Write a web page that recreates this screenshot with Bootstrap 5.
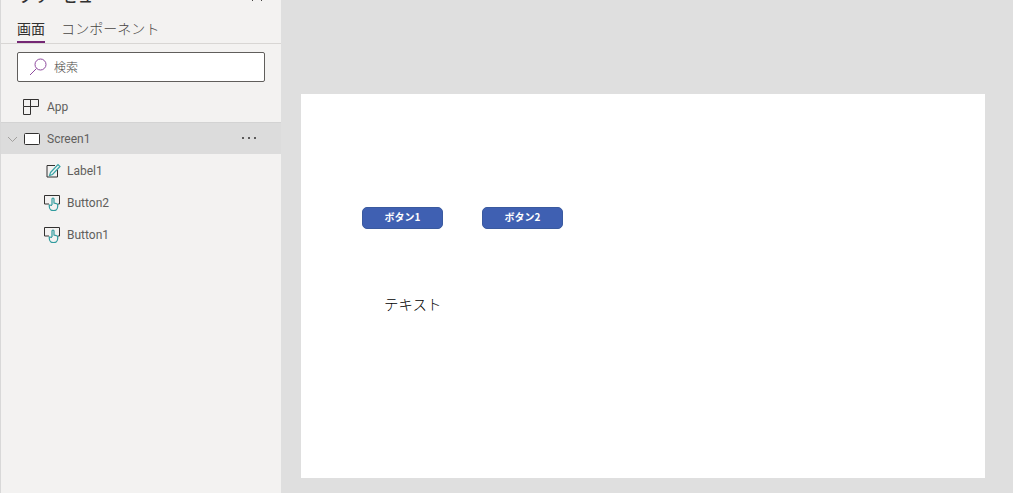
<!DOCTYPE html>
<html lang="ja">
<head>
<meta charset="utf-8">
<link href="https://cdn.jsdelivr.net/npm/bootstrap@5.3.0/dist/css/bootstrap.min.css" rel="stylesheet">
<style>
html,body{height:493px;overflow:hidden;}
body{background:#dfdfdf;font-family:Roboto,"Noto Sans CJK JP",sans-serif;color:#605e5c;}
.shell{height:493px;}
.tree{width:281px;flex:none;height:493px;background:#f3f2f1;border-left:1px solid #d8d8d8;overflow:hidden;}
.tree-head{height:28px;margin-top:-18px;padding:0 18px 0 17px;}
.tree-title{font:500 15px/28px "Noto Sans CJK JP",sans-serif;color:#323130;}
.tab-row{height:34px;border-bottom:1px solid #d8d6d4;padding-left:16px;gap:16px;}
.tab-item{font:300 14px/20px "Noto Sans CJK JP",sans-serif;letter-spacing:.05px;color:#484644;height:33px;padding-top:8px;}
.tab-on{font-weight:400;color:#323130;border-bottom:2px solid #742774;}
.find{margin:8px 16px 0 16px;height:30px;background:#fff;border:1px solid #605e5c;border-radius:2px;padding-left:11px;gap:5px;font:300 12px/1 "Noto Sans CJK JP",sans-serif;color:#484644;}
.rowi{height:32px;font-size:12px;color:#605e5c;padding-top:1px;}
.rowi svg{flex:none;}
.r-app{margin-top:9px;padding-left:22px;gap:8px;height:31px;}
.r-screen{background:#dcdcdc;border-top:1px solid #d3d3d3;padding-left:6px;padding-right:24px;}
.scr-box{margin:0 7px 0 6px;}
.r-child{padding-left:43px;gap:6px;}
.dots{margin-left:auto;margin-bottom:3px;}
.canvas{flex:1;padding:94px 28px 15px 20px;}
.paper{background:#fff;height:384px;width:684px;padding:113px 0 0 61px;}
.fake-btn{width:81px;height:22px;background:#3f60b2;border:1px solid #3a5a9f;border-radius:5px;color:#fff;font:700 10px/18px "Noto Sans CJK JP",sans-serif;text-align:center;padding:0 0 2px;}
.btn-pair{gap:39px;}
.lbl{font:300 14.5px/20px "Noto Sans CJK JP",sans-serif;color:#000;margin:65px 0 0 22px;}
</style>
</head>
<body>
<div class="shell d-flex">
  <aside class="tree">
    <div class="tree-head d-flex justify-content-between align-items-center">
      <span class="tree-title">ツリービュー</span>
      <svg width="12" height="12" viewBox="0 0 12 12"><path d="M1 1l10 10M11 1L1 11" stroke="#484644" stroke-width="1" fill="none"/></svg>
    </div>
    <div class="tab-row d-flex">
      <div class="tab-item tab-on">画面</div>
      <div class="tab-item">コンポーネント</div>
    </div>
    <div class="find d-flex align-items-center">
      <svg width="20" height="20" viewBox="0 0 20 20"><circle cx="11.5" cy="7.5" r="5.5" fill="none" stroke="#8e4a9e" stroke-width="1"/><path d="M7.5 11.5L1 18" stroke="#8e4a9e" stroke-width="1"/></svg>
      <span>検索</span>
    </div>
    <div class="rowi r-app d-flex align-items-center">
      <svg width="16" height="16" viewBox="0 0 16 16"><path d="M.5 .5h15v7H.5zM.5 7.5v8h7V.5" fill="none" stroke="#323130"/></svg>
      <span>App</span>
    </div>
    <div class="rowi r-screen d-flex align-items-center">
      <svg width="11" height="7" viewBox="0 0 11 7"><path d="M1 1l4.5 4.5L10 1" fill="none" stroke="#a19f9d"/></svg>
      <svg class="scr-box" width="16" height="12" viewBox="0 0 16 12"><rect x=".5" y=".5" width="15" height="11" rx="1" fill="#fff" stroke="#323130"/></svg>
      <span>Screen1</span>
      <svg class="dots" width="16" height="4" viewBox="0 0 16 4"><circle cx="2" cy="2" r="1" fill="#323130"/><circle cx="8" cy="2" r="1" fill="#323130"/><circle cx="14" cy="2" r="1" fill="#323130"/></svg>
    </div>
    <div class="rowi r-child d-flex align-items-center">
      <svg width="17" height="16" viewBox="0 0 17 16"><path d="M13.500 7v7H3V2.500h8" fill="none" stroke="#323130"/><path d="M6.500 9.500L14 1.500l2 2-7.500 8-3 1z" fill="#f3f2f1" stroke="#38a3a5" stroke-width="1.200"/></svg>
      <span>Label1</span>
    </div>
    <div class="rowi r-child d-flex align-items-center">
      <svg width="17" height="17" viewBox="0 0 17 17"><path d="M5 10H.5V1.500h15V10H14" fill="none" stroke="#323130"/><path d="M8 11V5a1 1 0 0 1 2 0v4l2.500.6a1.500 1.500 0 0 1 1.200 1.500v1.400a4.200 4.200 0 0 1-8.400 0v-1.500L8 11.500" fill="#f3f2f1" stroke="#2f9b9e" stroke-width="1.200"/></svg>
      <span>Button2</span>
    </div>
    <div class="rowi r-child d-flex align-items-center">
      <svg width="17" height="17" viewBox="0 0 17 17"><path d="M5 10H.5V1.500h15V10H14" fill="none" stroke="#323130"/><path d="M8 11V5a1 1 0 0 1 2 0v4l2.500.6a1.500 1.500 0 0 1 1.200 1.500v1.400a4.200 4.200 0 0 1-8.400 0v-1.500L8 11.500" fill="#f3f2f1" stroke="#2f9b9e" stroke-width="1.200"/></svg>
      <span>Button1</span>
    </div>
  </aside>
  <main class="canvas">
    <div class="paper">
      <div class="btn-pair d-flex">
        <button type="button" class="fake-btn">ボタン1</button>
        <button type="button" class="fake-btn">ボタン2</button>
      </div>
      <div class="lbl">テキスト</div>
    </div>
  </main>
</div>
<script src="https://cdn.jsdelivr.net/npm/bootstrap@5.3.0/dist/js/bootstrap.bundle.min.js"></script>
</body>
</html>
